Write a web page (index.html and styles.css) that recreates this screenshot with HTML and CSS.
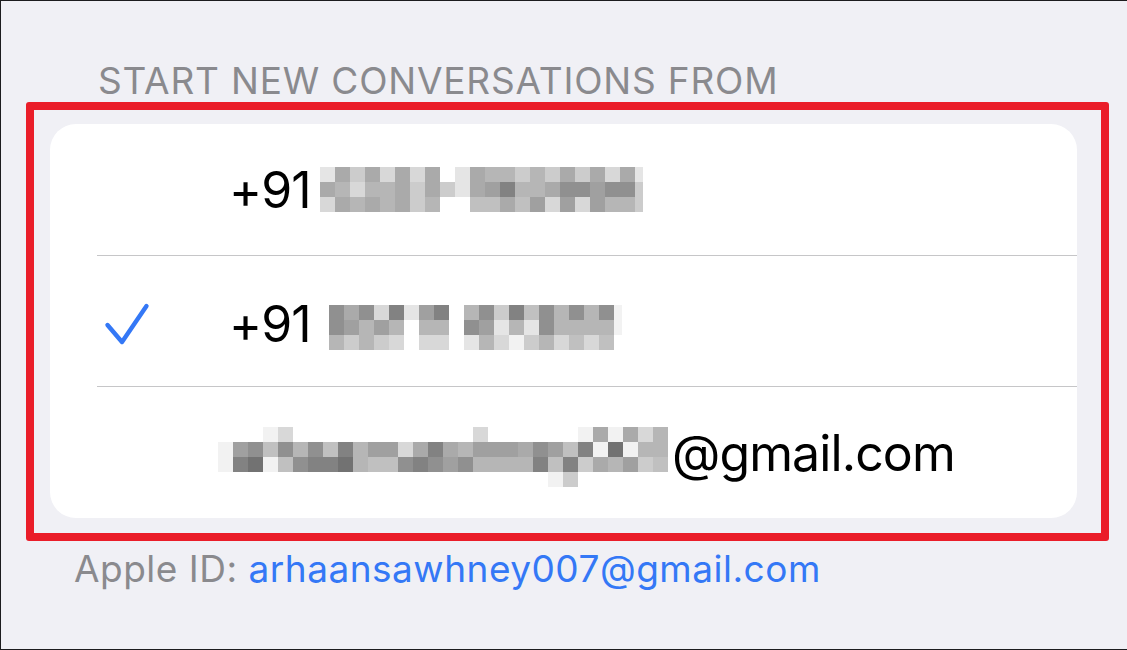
FILE: index.html
```html
<!DOCTYPE html>
<html>
<head>
    <title>Messages - Send &amp; Receive</title>
    <meta charset="UTF-8">
    <meta name="viewport" content="width=device-width, initial-scale=1.0">
    <link rel="stylesheet" href="styles.css">
</head>
<body>
    <div class="screen">
        <div class="section-title">START NEW CONVERSATIONS FROM</div>

        <div class="highlight">
            <div class="card">
                <div class="row first">
                    <span class="mark"></span>
                    <span class="value">+91</span>
                    <div class="pixels" data-rows="16362626.1655353636261|6525563631679556887883|26565635..446472727553"></div>
                </div>
                <div class="divider"></div>
                <div class="row second">
                    <span class="mark">
                        <svg width="48" height="46" viewBox="0 0 48 46">
                            <path d="M4.5 24 L19 41 L43.5 5" fill="none" stroke="#3478f6" stroke-width="4.4" stroke-linecap="round" stroke-linejoin="round"/>
                        </svg>
                    </span>
                    <span class="value">+91</span>
                    <div class="pixels" data-rows="86829179.58394858580|87575.55.87151855550|53532.22.1520352424."></div>
                </div>
                <div class="divider"></div>
                <div class="row last">
                    <span class="mark"></span>
                    <div class="pixels" data-rows="...02............2......060625|07848584957726965777687490x055|09x04899x544898785555949365734|......................03......"></div>
                    <span class="value">@gmail.com</span>
                </div>
            </div>
        </div>

        <div class="footer">Apple ID: <span class="link">arhaansawhney007@gmail.com</span></div>
    </div>

    <script src="app.js"></script>
</body>
</html>
```

FILE: styles.css
```css
body {
    margin: 0;
    background-color: #f0f0f5;
    font-family: Inter, "Liberation Sans", sans-serif;
}
.screen {
    height: 650px;
    box-sizing: border-box;
    border: 1px solid #1c1c1e;
    border-right: none;
    padding-top: 60px;
}
.section-title {
    margin-left: 97px;
    font-size: 37px;
    line-height: 40px;
    color: #8a8a8e;
    letter-spacing: 0.82px;
}
.highlight {
    box-sizing: border-box;
    width: 1083px;
    height: 439px;
    margin: 1px 0 0 25px;
    padding: 14px 24px 15px 16px;
    border: 8px solid #ea1d29;
    border-radius: 3px;
}
.card {
    height: 100%;
    display: flex;
    flex-direction: column;
    background-color: #fff;
    border-radius: 26px;
}
.row {
    display: flex;
    align-items: center;
    height: 131px;
    padding-left: 53px;
    box-sizing: border-box;
}
.row.second {
    height: 130px;
    padding-top: 5px;
}
.row.last {
    flex: 1;
    height: auto;
}
.mark {
    width: 126px;
    flex-shrink: 0;
    display: flex;
    align-items: center;
}
.value {
    font-size: 50px;
    letter-spacing: -0.9px;
    color: #000;
}
.divider {
    height: 1px;
    margin-left: 47px;
    background-color: #c6c6c8;
}
.pixels {
    display: flex;
    flex-direction: column;
}
.first .pixels {
    margin-left: 9px;
}
.second .pixels {
    margin-left: 18px;
    margin-top: 8px;
}
.last .pixels {
    margin-left: -11px;
    margin-right: 4px;
    margin-top: 9px;
}
.pixel-row {
    display: flex;
}
.pixel-row span {
    width: 15px;
    height: 15px;
}
.first .pixel-row span:last-child {
    width: 8px;
}
.second .pixel-row span:last-child {
    width: 8px;
}
.c0 { background-color: #f2f2f2; }
.c1 { background-color: #e5e5e5; }
.c2 { background-color: #d8d8d8; }
.c3 { background-color: #cccccc; }
.c4 { background-color: #c0c0c0; }
.c5 { background-color: #b6b6b6; }
.c6 { background-color: #aaaaaa; }
.c7 { background-color: #a0a0a0; }
.c8 { background-color: #909090; }
.c9 { background-color: #828282; }
.cx { background-color: #727272; }
.ce { background-color: transparent; }
.footer {
    margin: 8px 0 0 73px;
    font-size: 37px;
    line-height: 40px;
    letter-spacing: 0.5px;
    color: #8a8a8e;
}
.link {
    color: #3478f6;
}
```

FILE: app.js
```js
// Build the blurred (pixelated) blocks from their shade rows
document.querySelectorAll('.pixels').forEach(function(grid) {
    grid.dataset.rows.split('|').forEach(function(line) {
        const row = document.createElement('div');
        row.className = 'pixel-row';
        for (const ch of line) {
            const cell = document.createElement('span');
            cell.className = ch === '.' ? 'ce' : 'c' + ch;
            row.appendChild(cell);
        }
        grid.appendChild(row);
    });
});
```
